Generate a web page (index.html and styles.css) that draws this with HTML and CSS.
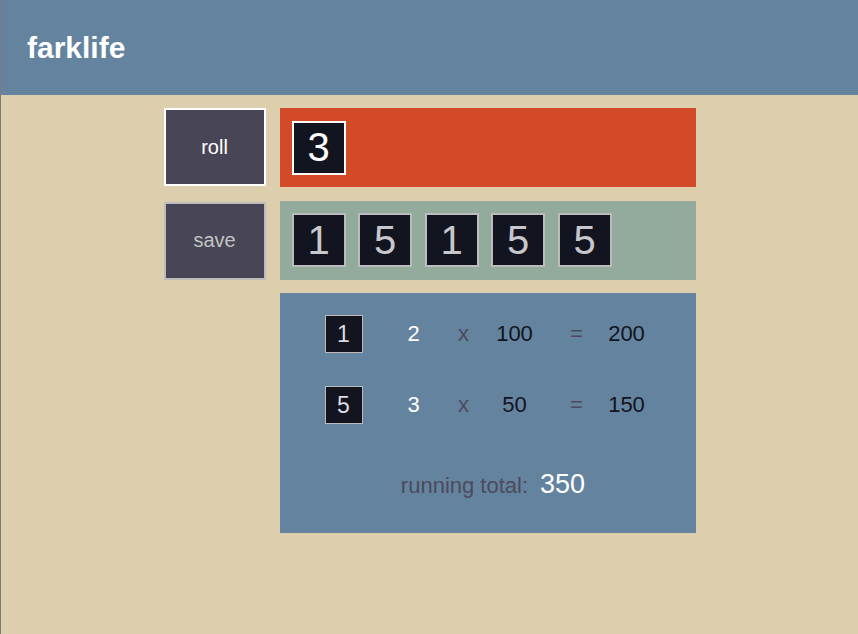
FILE: index.html
```html
<!DOCTYPE html>
<html lang="en">
<head>
<meta charset="utf-8">
<title>farklife</title>
<link rel="stylesheet" href="styles.css">
</head>
<body>
<div class="page">
  <header class="topbar"><h1 class="brand">farklife</h1></header>
  <main class="board">
    <button class="btn btn-roll">roll</button>
    <div class="tray tray-roll">
      <div class="die die-big die-active">3</div>
    </div>
    <button class="btn btn-save">save</button>
    <div class="tray tray-saved">
      <div class="die die-big">1</div>
      <div class="die die-big">5</div>
      <div class="die die-big">1</div>
      <div class="die die-big">5</div>
      <div class="die die-big">5</div>
    </div>
    <section class="score">
      <div class="score-rows">
        <div class="cell"><div class="die die-small">1</div></div>
        <div class="cell count">2</div>
        <div class="cell op">x</div>
        <div class="cell val">100</div>
        <div class="cell op">=</div>
        <div class="cell val">200</div>

        <div class="cell"><div class="die die-small">5</div></div>
        <div class="cell count">3</div>
        <div class="cell op">x</div>
        <div class="cell val">50</div>
        <div class="cell op">=</div>
        <div class="cell val">150</div>
      </div>
      <div class="total">
        <span class="total-label">running total:</span>
        <span class="total-value">350</span>
      </div>
    </section>
  </main>
</div>
</body>
</html>
```

FILE: styles.css
```css
html, body {
  margin: 0;
  padding: 0;
}
body {
  background: #ddceae;
  font-family: "Liberation Sans", Arial, sans-serif;
}
.page {
  min-height: 100vh;
  border-left: 1px solid #7b7b7b;
  background: #ddceae;
}
.topbar {
  height: 95px;
  background: #64839f;
  display: flex;
  align-items: center;
  padding-left: 26px;
}
.brand {
  margin: 0;
  color: #ffffff;
  font-size: 30px;
  font-weight: bold;
  line-height: 1;
}
.board {
  width: 532px;
  margin: 13px auto 0;
  display: grid;
  grid-template-columns: 102px 416px;
  grid-template-rows: 79px 79px 240px;
  column-gap: 14px;
  row-gap: 13.5px;
}
.btn {
  box-sizing: border-box;
  width: 102px;
  background: #474556;
  font-family: "Liberation Sans", Arial, sans-serif;
  font-size: 20px;
  padding: 0;
  margin: 0;
  cursor: pointer;
}
.btn-roll {
  height: 78px;
  border: 2px solid #ffffff;
  color: #ffffff;
  align-self: start;
}
.btn-save {
  height: 78px;
  border: 2px solid #bcbcbc;
  color: #c4c4c4;
  align-self: end;
}
.tray {
  display: flex;
  align-items: center;
  padding-left: 12px;
  gap: 12.5px;
}
.tray-roll {
  background: #d24a27;
}
.tray-saved {
  background: #93ab9d;
}
.die {
  box-sizing: border-box;
  background: #121420;
  display: flex;
  align-items: center;
  justify-content: center;
}
.die-big {
  width: 54px;
  height: 54px;
  border: 2px solid #bcbcbc;
  color: #c8c8cc;
  font-size: 40px;
}
.die-active {
  border-color: #ffffff;
  color: #ffffff;
}
.die-small {
  width: 38px;
  height: 38px;
  border: 1px solid #bcbcbc;
  color: #dcdce0;
  font-size: 23px;
}
.score {
  grid-column: 2;
  background: #64839f;
  padding-top: 22px;
  box-sizing: border-box;
}
.score-rows {
  display: grid;
  padding-left: 24px;
  grid-template-columns: 80px 60px 40px 62px 62px 38px;
  grid-auto-rows: 38px;
  row-gap: 33px;
  align-items: center;
  justify-items: center;
  font-size: 22px;
}
.cell {
  line-height: 1;
}
.count {
  color: #ffffff;
}
.op {
  color: #4c4a5c;
}
.val {
  color: #121420;
}
.total {
  display: flex;
  justify-content: center;
  align-items: baseline;
  gap: 12px;
  margin-top: 45px;
  padding-left: 11px;
}
.total-label {
  color: #4c4a5c;
  font-size: 22px;
}
.total-value {
  color: #ffffff;
  font-size: 27px;
}
```
